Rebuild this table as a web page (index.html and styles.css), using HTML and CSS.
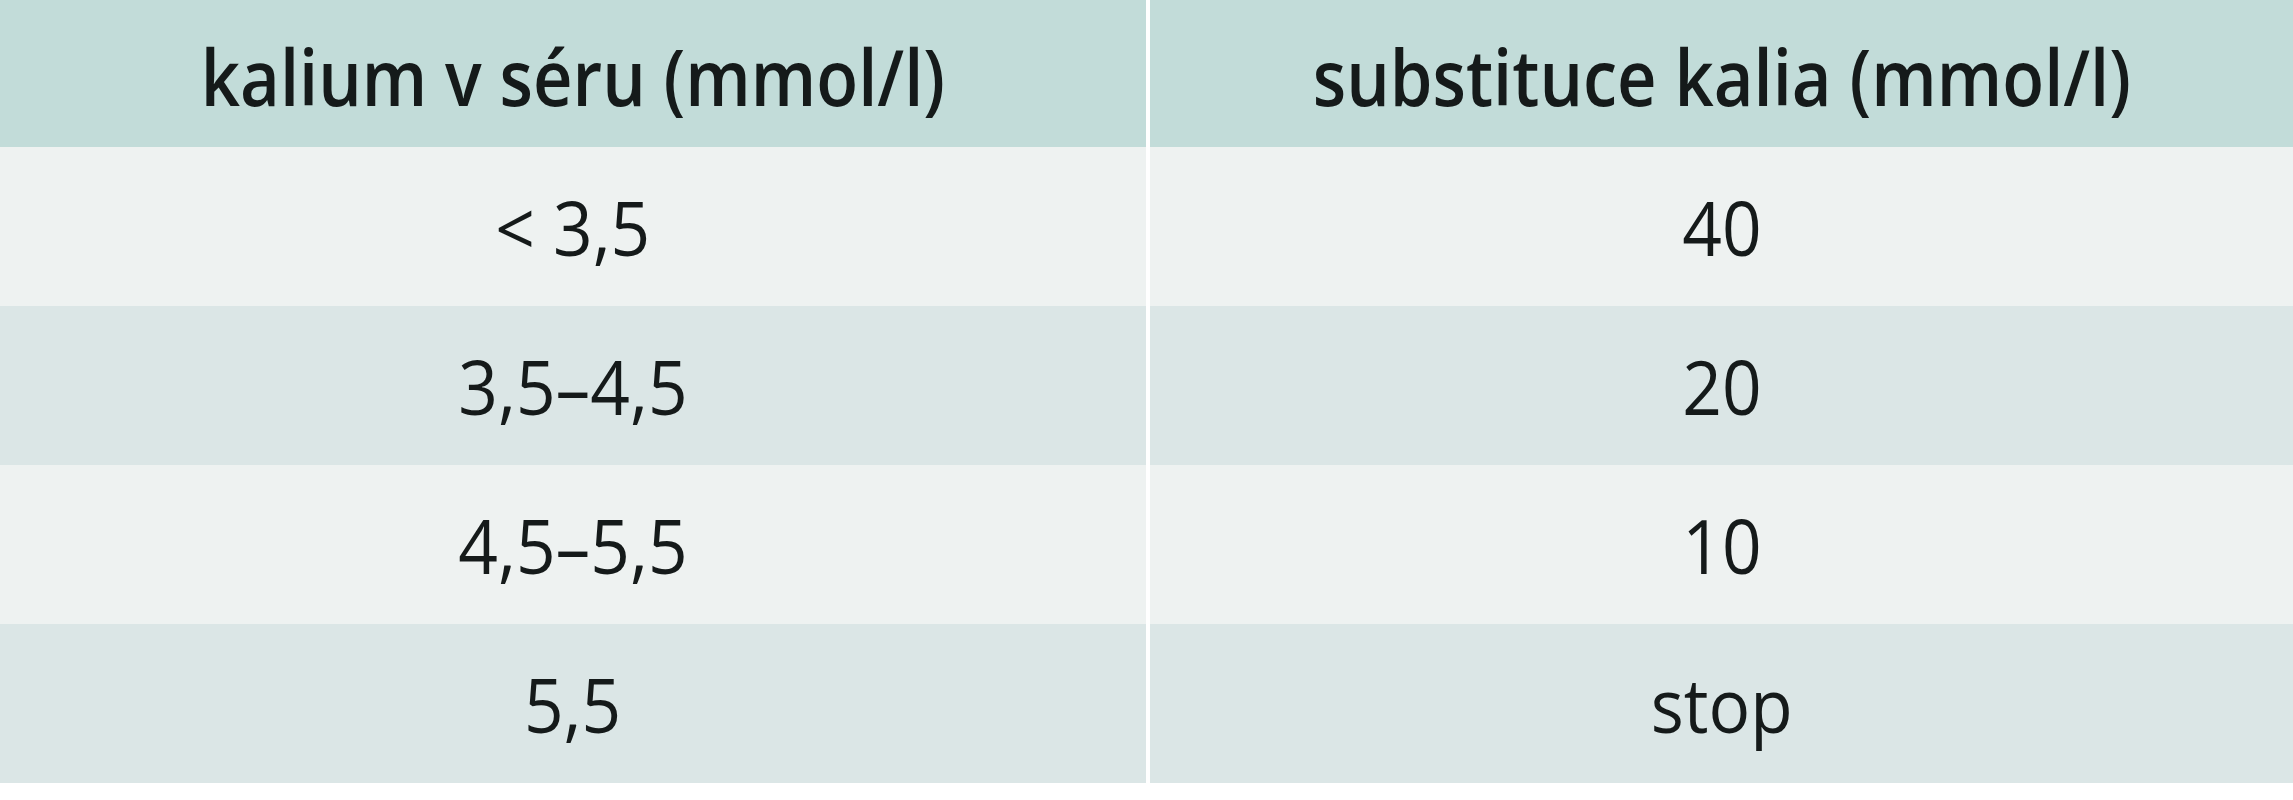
FILE: index.html
```html
<!DOCTYPE html>
<html lang="cs">
<head>
<meta charset="utf-8">
<link rel="stylesheet" href="styles.css">
</head>
<body>
<div class="table">
  <div class="row head">
    <div class="cell"><span class="txt">kalium v séru (mmol/l)</span></div>
    <div class="cell"><span class="txt">substituce kalia (mmol/l)</span></div>
  </div>
  <div class="row light">
    <div class="cell"><span class="txt">&lt; 3,5</span></div>
    <div class="cell"><span class="txt">40</span></div>
  </div>
  <div class="row dark">
    <div class="cell"><span class="txt">3,5–4,5</span></div>
    <div class="cell"><span class="txt">20</span></div>
  </div>
  <div class="row light">
    <div class="cell"><span class="txt">4,5–5,5</span></div>
    <div class="cell"><span class="txt">10</span></div>
  </div>
  <div class="row dark">
    <div class="cell"><span class="txt">5,5</span></div>
    <div class="cell"><span class="txt">stop</span></div>
  </div>
</div>
</body>
</html>
```
FILE: styles.css
```css
html, body {
  margin: 0;
  padding: 0;
  background: #ffffff;
}
body {
  width: 2293px;
  height: 800px;
  overflow: hidden;
  font-family: "Open Sans", "Liberation Sans", sans-serif;
  color: #151a1a;
}
.table {
  display: flex;
  flex-direction: column;
  width: 2293px;
}
.row {
  display: grid;
  grid-template-columns: 1146px 1fr;
  column-gap: 4px;
  height: 159px;
  background: #ffffff;
}
.row.head {
  height: 147px;
}
.cell {
  display: flex;
  align-items: center;
  justify-content: center;
  font-size: 75px;
}
.txt {
  display: inline-block;
  white-space: nowrap;
  transform: scaleX(0.925);
}
.head .cell {
  background: #c2dcd9;
  font-weight: 600;
  font-size: 78px;
  padding-top: 4px;
}
.head .txt {
  transform: scaleX(0.88);
}
.light .cell {
  background: #eef2f1;
}
.dark .cell {
  background: #dbe6e6;
}
```
